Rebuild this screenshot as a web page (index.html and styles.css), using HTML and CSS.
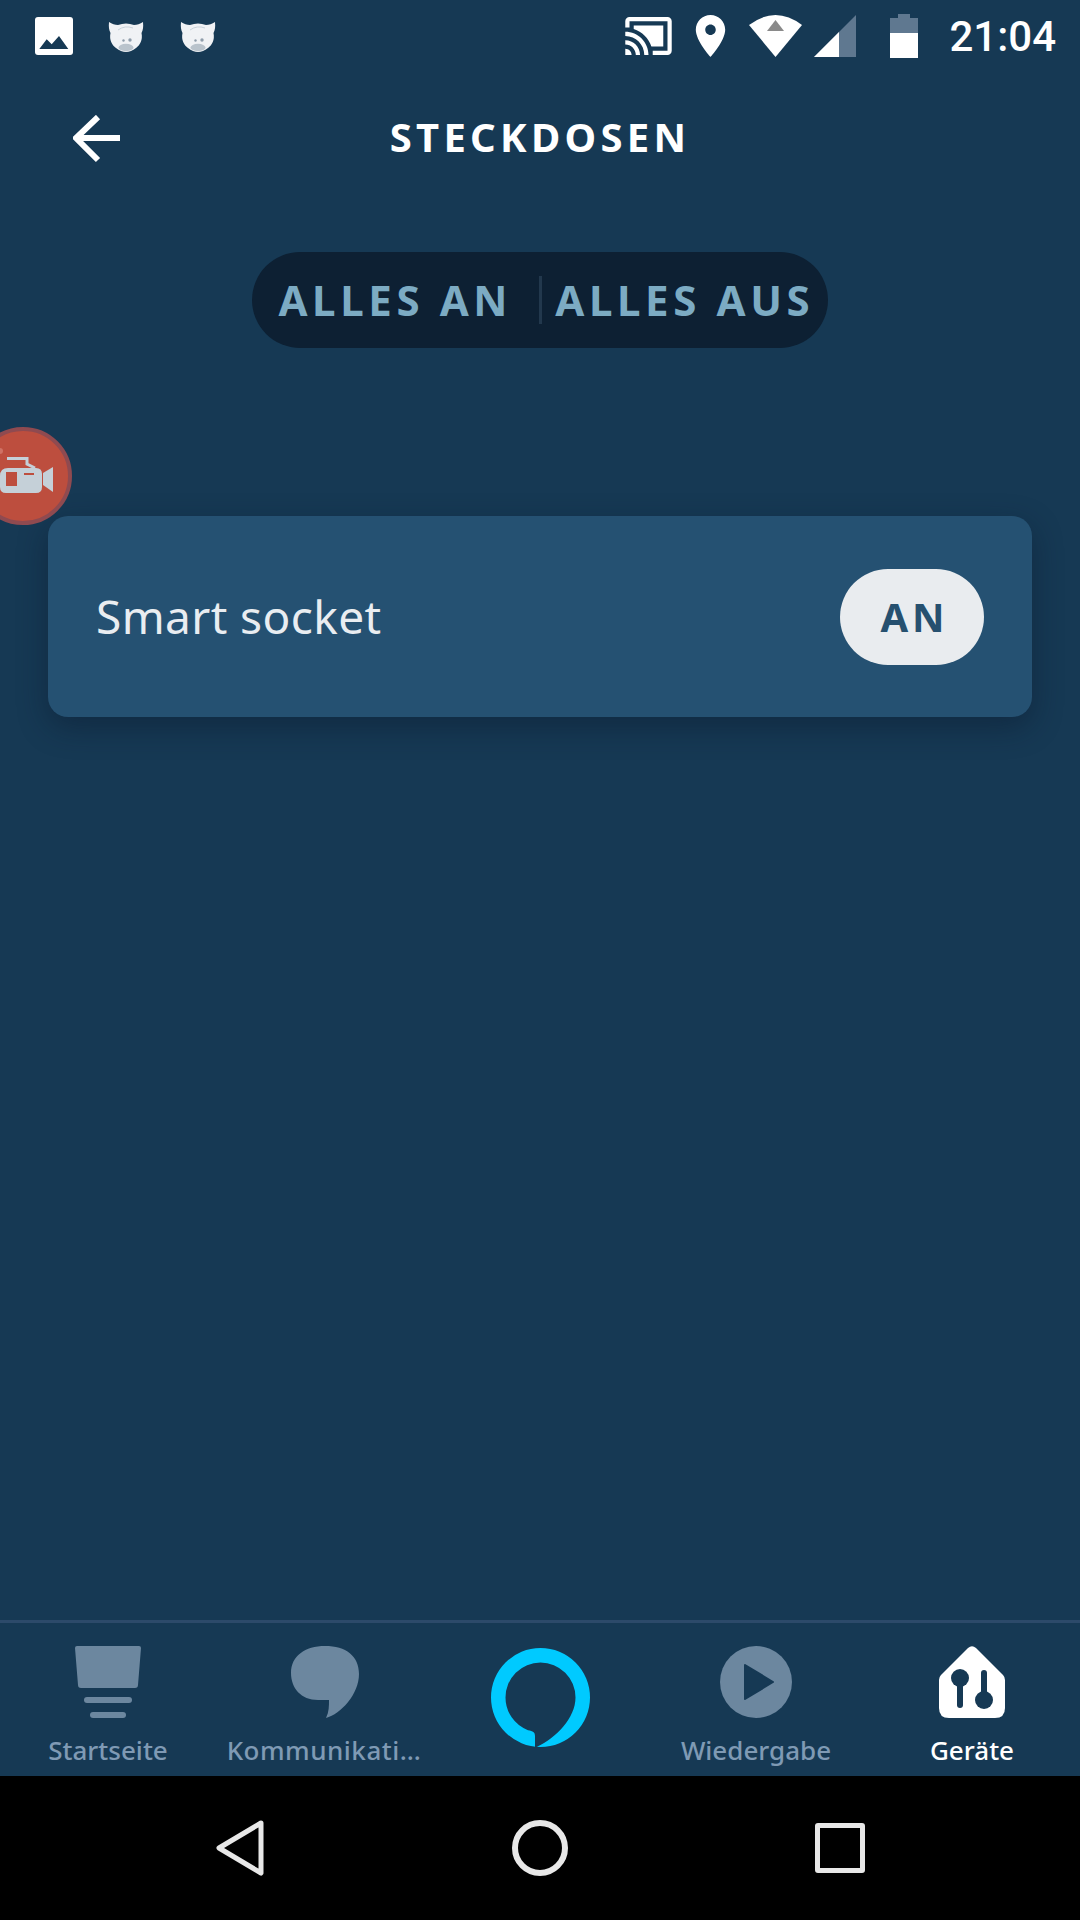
FILE: index.html
```html
<!DOCTYPE html>
<html lang="de">
<head>
    <meta charset="UTF-8">
    <meta name="viewport" content="width=device-width, initial-scale=1.0">
    <title>Steckdosen</title>
    <link rel="stylesheet" href="styles.css">
</head>
<body>
    <div class="app">
        <div class="status-bar">
            <div class="status-left">
                <svg class="ic-image" viewBox="0 0 38 38"><rect width="38" height="38" rx="3" fill="#fff"/><path d="M4.3 32L11.7 22.3 16.7 27.3 24 19 33.3 32Z" fill="#163954"/></svg>
                <svg class="ic-pig" viewBox="0 0 36 32"><path d="M1 2C4 4 7 5 10 5Q18 2 26 5C29 5 32 4 35 2C35.500 7 35 10 33.500 13C35 20 32 25 28 28Q23 32 18 32Q13 32 8 28C4 25 1 20 2.500 13C1 10 .5 7 1 2Z" fill="#f0f2f5"/><path d="M10 10Q17 5 25 8" fill="none" stroke="#c9d2da" stroke-width="1"/><circle cx="15.500" cy="20.500" r="1.200" fill="#8f9dab"/><circle cx="22" cy="20" r="1.700" fill="#8f9dab"/><ellipse cx="18" cy="27.500" rx="7.500" ry="3.700" fill="#b9c3cc"/></svg>
                <svg class="ic-pig" viewBox="0 0 36 32"><path d="M1 2C4 4 7 5 10 5Q18 2 26 5C29 5 32 4 35 2C35.500 7 35 10 33.500 13C35 20 32 25 28 28Q23 32 18 32Q13 32 8 28C4 25 1 20 2.500 13C1 10 .5 7 1 2Z" fill="#f0f2f5"/><path d="M10 10Q17 5 25 8" fill="none" stroke="#c9d2da" stroke-width="1"/><circle cx="15.500" cy="20.500" r="1.200" fill="#8f9dab"/><circle cx="22" cy="20" r="1.700" fill="#8f9dab"/><ellipse cx="18" cy="27.500" rx="7.500" ry="3.700" fill="#b9c3cc"/></svg>
            </div>
            <div class="status-right">
                <svg class="ic-cast" viewBox="1 3 22 18"><path fill="#fff" d="M21 3H3c-1.100 0-2 .9-2 2v3h2V5h18v14h-7v2h7c1.100 0 2-.9 2-2V5c0-1.100-.9-2-2-2zM1 18v3h3c0-1.660-1.340-3-3-3zm0-4v2c2.760 0 5 2.240 5 5h2c0-3.870-3.130-7-7-7zm0-4v2c4.970 0 9 4.030 9 9h2c0-6.080-4.930-11-11-11zM19 7H5v1.630c3.960 1.280 7.090 4.410 8.370 8.370H19V7z"/></svg>
                <svg class="ic-pin" viewBox="5 2 14 20"><path fill="#fff" d="M12 2C8.130 2 5 5.130 5 9c0 5.250 7 13 7 13s7-7.750 7-13c0-3.870-3.130-7-7-7zm0 9.500c-1.380 0-2.500-1.120-2.500-2.500s1.120-2.500 2.500-2.500 2.500 1.120 2.500 2.500-1.120 2.500-2.500 2.500z"/></svg>
                <svg class="ic-wifi" viewBox="0 0 53 42"><path d="M0 10Q26.500-10 53 10L26.500 42Z" fill="#fff"/><path d="M26.500 5L35 16H18Z" fill="#8a8a8a"/></svg>
                <svg class="ic-signal" viewBox="0 0 42 42"><path d="M0 42L42 0V42Z" fill="#5f7890"/><path d="M0 42L25 17V42Z" fill="#fff"/></svg>
                <svg class="ic-battery" viewBox="0 0 28 44"><path d="M8 0H20V4H28V19H0V4H8Z" fill="#5f7890"/><rect y="19" width="28" height="25" fill="#fff"/></svg>
                <span class="clock">21:04</span>
            </div>
        </div>

        <div class="header">
            <svg class="back-arrow" viewBox="0 0 47 48"><path d="M47 23H3M25 2L3 23 25 45" fill="none" stroke="#fff" stroke-width="6"/></svg>
            <div class="title">STECKDOSEN</div>
        </div>

        <div class="all-switch">
            <span class="all-btn">ALLES AN</span>
            <span class="all-divider"></span>
            <span class="all-btn">ALLES AUS</span>
        </div>

        <div class="card">
            <span class="card-name">Smart socket</span>
            <button class="on-btn">AN</button>
        </div>

        <div class="spacer"></div>

        <div class="tabbar">
            <div class="tab">
                <svg class="tab-icon" width="66" height="72" viewBox="0 0 66 72"><path d="M2 0H64Q66 0 66 2L63 39Q63 42 60 42H6Q3 42 3 39L0 2Q0 0 2 0Z" fill="#6c879f"/><rect x="9" y="51" width="48" height="6" rx="3" fill="#6c879f"/><rect x="15" y="66" width="36" height="6" rx="3" fill="#6c879f"/></svg>
                <span class="tab-label">Startseite</span>
            </div>
            <div class="tab tab-comm">
                <svg class="tab-icon" width="68" height="72" viewBox="0 0 68 72"><path d="M34 0C55 0 68 10 68 28C68 48 50 68 35 72C38 66 38 60 38 54H27C10 54 0 42 0 27C0 10 14 0 34 0Z" fill="#6c879f"/></svg>
                <span class="tab-label">Kommunikati…</span>
            </div>
            <div class="tab tab-alexa">
                <svg width="99" height="99" viewBox="0 0 99 99"><path fill="#00caff" fill-rule="evenodd" d="M49.500 0A49.500 49.500 0 1 1 49.500 99A49.500 49.500 0 1 1 49.500 0ZM49.500 14.500A35 35 0 0 1 84.500 49.500C84.500 70 65 90 46 98.800L44 98.800V88C44 84 42 83 37 82.200A35 35 0 0 1 14.500 49.500A35 35 0 0 1 49.500 14.500Z"/></svg>
            </div>
            <div class="tab">
                <svg class="tab-icon" width="72" height="72" viewBox="0 0 72 72"><circle cx="36" cy="36" r="36" fill="#6c879f"/><path d="M25 19L53 36 25 53Z" fill="#163954" stroke="#163954" stroke-width="2" stroke-linejoin="round"/></svg>
                <span class="tab-label">Wiedergabe</span>
            </div>
            <div class="tab tab-active">
                <svg class="tab-icon" width="66" height="72" viewBox="0 0 66 72"><path d="M29 2Q33-1.500 37 2L64 29Q66 31 66 34V62Q66 72 56 72H10Q0 72 0 62V34Q0 31 2 29Z" fill="#fff"/><circle cx="21" cy="32" r="9" fill="#163954"/><rect x="18" y="32" width="6" height="30" rx="3" fill="#163954"/><rect x="42" y="24" width="6" height="30" rx="3" fill="#163954"/><circle cx="45" cy="54" r="9" fill="#163954"/></svg>
                <span class="tab-label">Geräte</span>
            </div>
        </div>

        <div class="system-bar">
            <svg class="sys-back" viewBox="0 0 48 56"><path d="M45 3L3 28 45 53Z" fill="none" stroke="#e8e8e8" stroke-width="5" stroke-linejoin="round"/></svg>
            <span class="sys-home"></span>
            <span class="sys-recent"></span>
        </div>

        <svg class="rec-bubble" viewBox="0 0 98 98">
            <circle cx="49" cy="49" r="47" fill="#bd4e3e" stroke="#8f4a50" stroke-width="4"/>
            <circle cx="26" cy="24" r="3" fill="#cf7265"/>
            <path d="M33 31.500H53V37L61 41" fill="none" stroke="#c5d0d8" stroke-width="3"/>
            <path fill="#c5d0d8" fill-rule="evenodd" d="M34 41H62Q68 41 68 47V60Q68 66 62 66H32Q26 66 26 60V49Q26 41 34 41ZM32 45V59H43V45ZM50 46V48H60V46Z"/>
            <path fill="#c5d0d8" d="M69 46L79 40V65L69 58Z"/>
        </svg>
    </div>
</body>
</html>
```

FILE: styles.css
```css
html, body {
    margin: 0;
    padding: 0;
}
body {
    width: 1080px;
    height: 1920px;
    overflow: hidden;
    font-family: "Noto Sans", "Open Sans", sans-serif;
    background-color: #163954;
}
.app {
    position: relative;
    display: flex;
    flex-direction: column;
    height: 1920px;
    overflow: hidden;
    background-color: #163954;
}
svg {
    display: block;
    flex-shrink: 0;
}

/* status bar */
.status-bar {
    display: flex;
    justify-content: space-between;
    align-items: center;
    height: 72px;
    padding: 0 24px 0 35px;
}
.status-left, .status-right {
    display: flex;
    align-items: center;
}
.ic-image {
    width: 38px;
    height: 38px;
    margin-right: 35px;
}
.ic-pig {
    width: 36px;
    height: 32px;
    margin-right: 36px;
}
.ic-cast {
    width: 47px;
    height: 38px;
    margin-right: 23px;
}
.ic-pin {
    width: 31px;
    height: 42px;
    margin-right: 23px;
}
.ic-wifi {
    width: 53px;
    height: 42px;
    margin-right: 12px;
}
.ic-signal {
    width: 42px;
    height: 42px;
    margin-right: 34px;
}
.ic-battery {
    width: 28px;
    height: 44px;
    margin-right: 31px;
}
.clock {
    font-family: "Roboto", sans-serif;
    font-size: 42px;
    font-weight: 500;
    color: #fff;
}

/* header */
.header {
    display: grid;
    grid-template-columns: 1fr auto 1fr;
    align-items: center;
    height: 134px;
    padding-left: 73px;
    padding-right: 73px;
}
.back-arrow {
    width: 47px;
    height: 48px;
}
.title {
    margin-bottom: 5px;
    font-size: 40px;
    font-weight: 700;
    letter-spacing: 4.3px;
    color: #fff;
}

/* alles an / aus */
.all-switch {
    display: grid;
    grid-template-columns: 1fr 3px 1fr;
    align-items: center;
    justify-items: center;
    align-self: center;
    width: 576px;
    height: 96px;
    margin-top: 46px;
    border-radius: 48px;
    background-color: #0d2033;
}
.all-btn {
    margin-bottom: 2px;
    font-size: 42px;
    font-weight: 700;
    letter-spacing: 4.6px;
    color: #7cabc3;
    white-space: nowrap;
}
.all-divider {
    width: 3px;
    height: 48px;
    background-color: #22384d;
}

/* card */
.card {
    display: flex;
    align-items: center;
    justify-content: space-between;
    height: 201px;
    margin: 168px 48px 0;
    padding: 0 48px;
    border-radius: 20px;
    background-color: #255172;
    box-shadow: 0 10px 30px rgba(10, 25, 45, 0.45);
}
.card-name {
    margin-bottom: 2px;
    font-size: 46px;
    letter-spacing: 0.4px;
    color: #e9edf1;
}
.on-btn {
    width: 144px;
    height: 96px;
    padding: 0 0 0 5px;
    border: none;
    border-radius: 48px;
    background-color: #e9ecef;
    color: #26506f;
    font-family: inherit;
    font-size: 40px;
    font-weight: 700;
    letter-spacing: 4px;
}
.spacer {
    flex: 1;
}

/* bottom tabs */
.tabbar {
    display: grid;
    grid-template-columns: repeat(5, 216px);
    height: 156px;
    border-top: 3px solid #2c4a6a;
    box-sizing: border-box;
}
.tab {
    display: flex;
    flex-direction: column;
    align-items: center;
    padding-top: 23px;
}
.tab-comm .tab-icon {
    margin-left: 2px;
}
.tab-comm .tab-label {
    letter-spacing: 0.5px;
}
.tab-alexa {
    padding-top: 25px;
}
.tab-label {
    margin-top: 14px;
    font-size: 26px;
    font-weight: 500;
    color: #7f9ab4;
    white-space: nowrap;
}
.tab-active .tab-label {
    color: #fff;
}

/* android nav */
.system-bar {
    display: grid;
    grid-template-columns: repeat(3, 300px);
    justify-items: center;
    align-items: center;
    height: 144px;
    padding: 0 90px;
    background-color: #000;
}
.sys-back {
    width: 48px;
    height: 56px;
}
.sys-home {
    width: 44px;
    height: 44px;
    border: 6px solid #e8e8e8;
    border-radius: 50%;
}
.sys-recent {
    width: 40px;
    height: 40px;
    border: 5px solid #e8e8e8;
    border-radius: 3px;
}

/* floating recorder button */
.rec-bubble {
    position: absolute;
    left: -26px;
    top: 427px;
    width: 98px;
    height: 98px;
}
```
